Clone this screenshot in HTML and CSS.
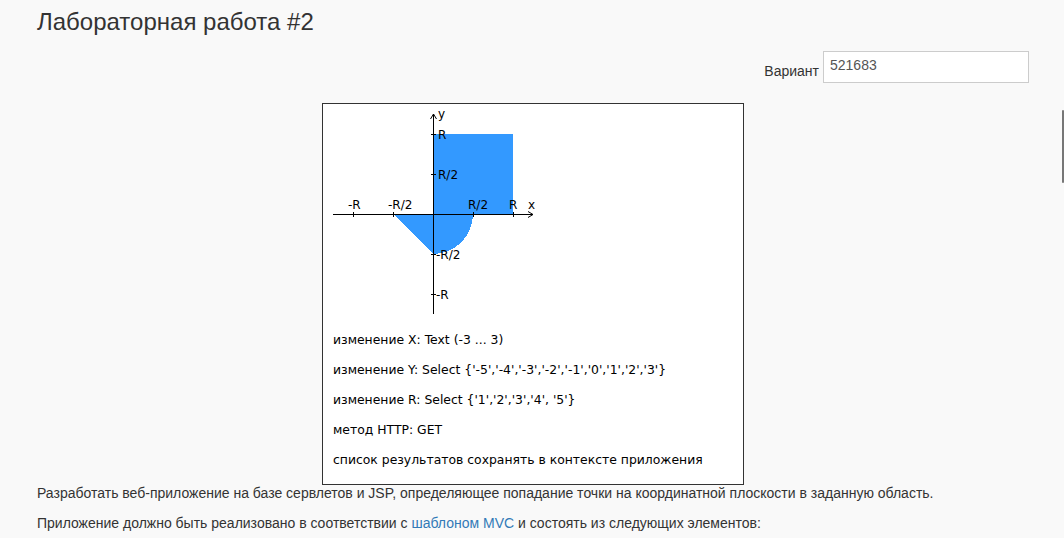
FILE: index.html
```html
<!DOCTYPE html>
<html lang="ru">
<head>
<meta charset="utf-8">
<title>Лабораторная работа #2</title>
<link rel="stylesheet" href="styles.css">
</head>
<body>
<div class="page">
  <h2 class="title">Лабораторная работа #2</h2>
  <div class="variant">
    <label class="variant-label" for="variant">Вариант</label>
    <input class="variant-input" id="variant" type="text" value="521683">
  </div>
  <div class="task">
    <svg class="graph" width="420" height="220" viewBox="0 0 420 220" xmlns="http://www.w3.org/2000/svg">
      <g fill="#3399ff" shape-rendering="crispEdges">
        <rect x="110" y="30" width="80" height="80"/>
        <polygon points="70,110 110,150 110,110"/>
        <path d="M110 110 L150 110 A40 40 0 0 1 110 150 Z"/>
      </g>
      <g stroke="#000" stroke-width="1" fill="none" shape-rendering="crispEdges">
        <line x1="10" y1="110.5" x2="210" y2="110.5"/>
        <line x1="110.5" y1="10" x2="110.5" y2="210"/>
        <polyline points="205,107.5 210,110.5 205,113.5" shape-rendering="auto"/>
        <polyline points="107.5,15 110.5,10 113.5,15" shape-rendering="auto"/>
        <line x1="30.5" y1="108" x2="30.5" y2="113"/>
        <line x1="70.5" y1="108" x2="70.5" y2="113"/>
        <line x1="150.5" y1="108" x2="150.5" y2="113"/>
        <line x1="190.5" y1="108" x2="190.5" y2="113"/>
        <line x1="108" y1="30.5" x2="113" y2="30.5"/>
        <line x1="108" y1="70.5" x2="113" y2="70.5"/>
        <line x1="108" y1="150.5" x2="113" y2="150.5"/>
        <line x1="108" y1="190.5" x2="113" y2="190.5"/>
      </g>
      <g class="graph-text">
        <text x="25" y="105">-R</text>
        <text x="65" y="105">-R/2</text>
        <text x="145" y="105">R/2</text>
        <text x="186" y="105">R</text>
        <text x="205" y="105">x</text>
        <text x="115" y="14">y</text>
        <text x="115" y="35">R</text>
        <text x="115" y="75">R/2</text>
        <text x="113" y="155">-R/2</text>
        <text x="113" y="195">-R</text>
      </g>
    </svg>
    <ul class="task-list">
      <li>изменение X: Text (-3 ... 3)</li>
      <li>изменение Y: Select {'-5','-4','-3','-2','-1','0','1','2','3'}</li>
      <li>изменение R: Select {'1','2','3','4', '5'}</li>
      <li>метод HTTP: GET</li>
      <li>список результатов сохранять в контексте приложения</li>
    </ul>
  </div>
  <p class="text">Разработать веб-приложение на базе сервлетов и JSP, определяющее попадание точки на координатной плоскости в заданную область.</p>
  <p class="text">Приложение должно быть реализовано в соответствии с <a class="link" href="#">шаблоном MVC</a> и состоять из следующих элементов:</p>
</div>
<div class="scroll-thumb"></div>
</body>
</html>
```

FILE: styles.css
```css
html, body {
  margin: 0;
  padding: 0;
  background: #f9f9f9;
  overflow: hidden;
}
body {
  font-family: "Liberation Sans", Arial, sans-serif;
  font-size: 14px;
  line-height: 20px;
  color: #333;
}
.page {
  padding: 0 35px 0 37px;
}
.title {
  margin: 9px 0 0;
  font-size: 24px;
  font-weight: 400;
  line-height: 1.1;
  color: #333;
}
.variant {
  margin-top: 16px;
  display: flex;
  justify-content: flex-end;
  gap: 4px;
  height: 32px;
}
.variant-label {
  align-self: flex-end;
  margin-bottom: 2px;
}
.variant-input {
  box-sizing: border-box;
  width: 206px;
  height: 32px;
  margin: 0;
  padding: 3px 6px 7px;
  border: 1px solid #ccc;
  background: #fff;
  font-family: "Liberation Sans", Arial, sans-serif;
  font-size: 14px;
  color: #555;
  outline: none;
}
.task {
  box-sizing: border-box;
  width: 422px;
  height: 382px;
  margin: 20px auto -2px;
  border: 1px solid #333;
  background: #fff;
}
.graph {
  display: block;
}
.graph-text {
  font-family: "DejaVu Sans", sans-serif;
  font-size: 12px;
  fill: #000;
}
.task-list {
  list-style: none;
  margin: 0;
  padding: 1px 0 0 10px;
  font-family: "DejaVu Sans", sans-serif;
  font-size: 12.4px;
  line-height: 30px;
  color: #000;
}
.text {
  margin: 0 0 10px;
}
.link {
  color: #337ab7;
  text-decoration: none;
}
.scroll-thumb {
  position: fixed;
  top: 110px;
  right: 0;
  width: 2px;
  height: 73px;
  background: #777;
  border-radius: 1px;
}
```
